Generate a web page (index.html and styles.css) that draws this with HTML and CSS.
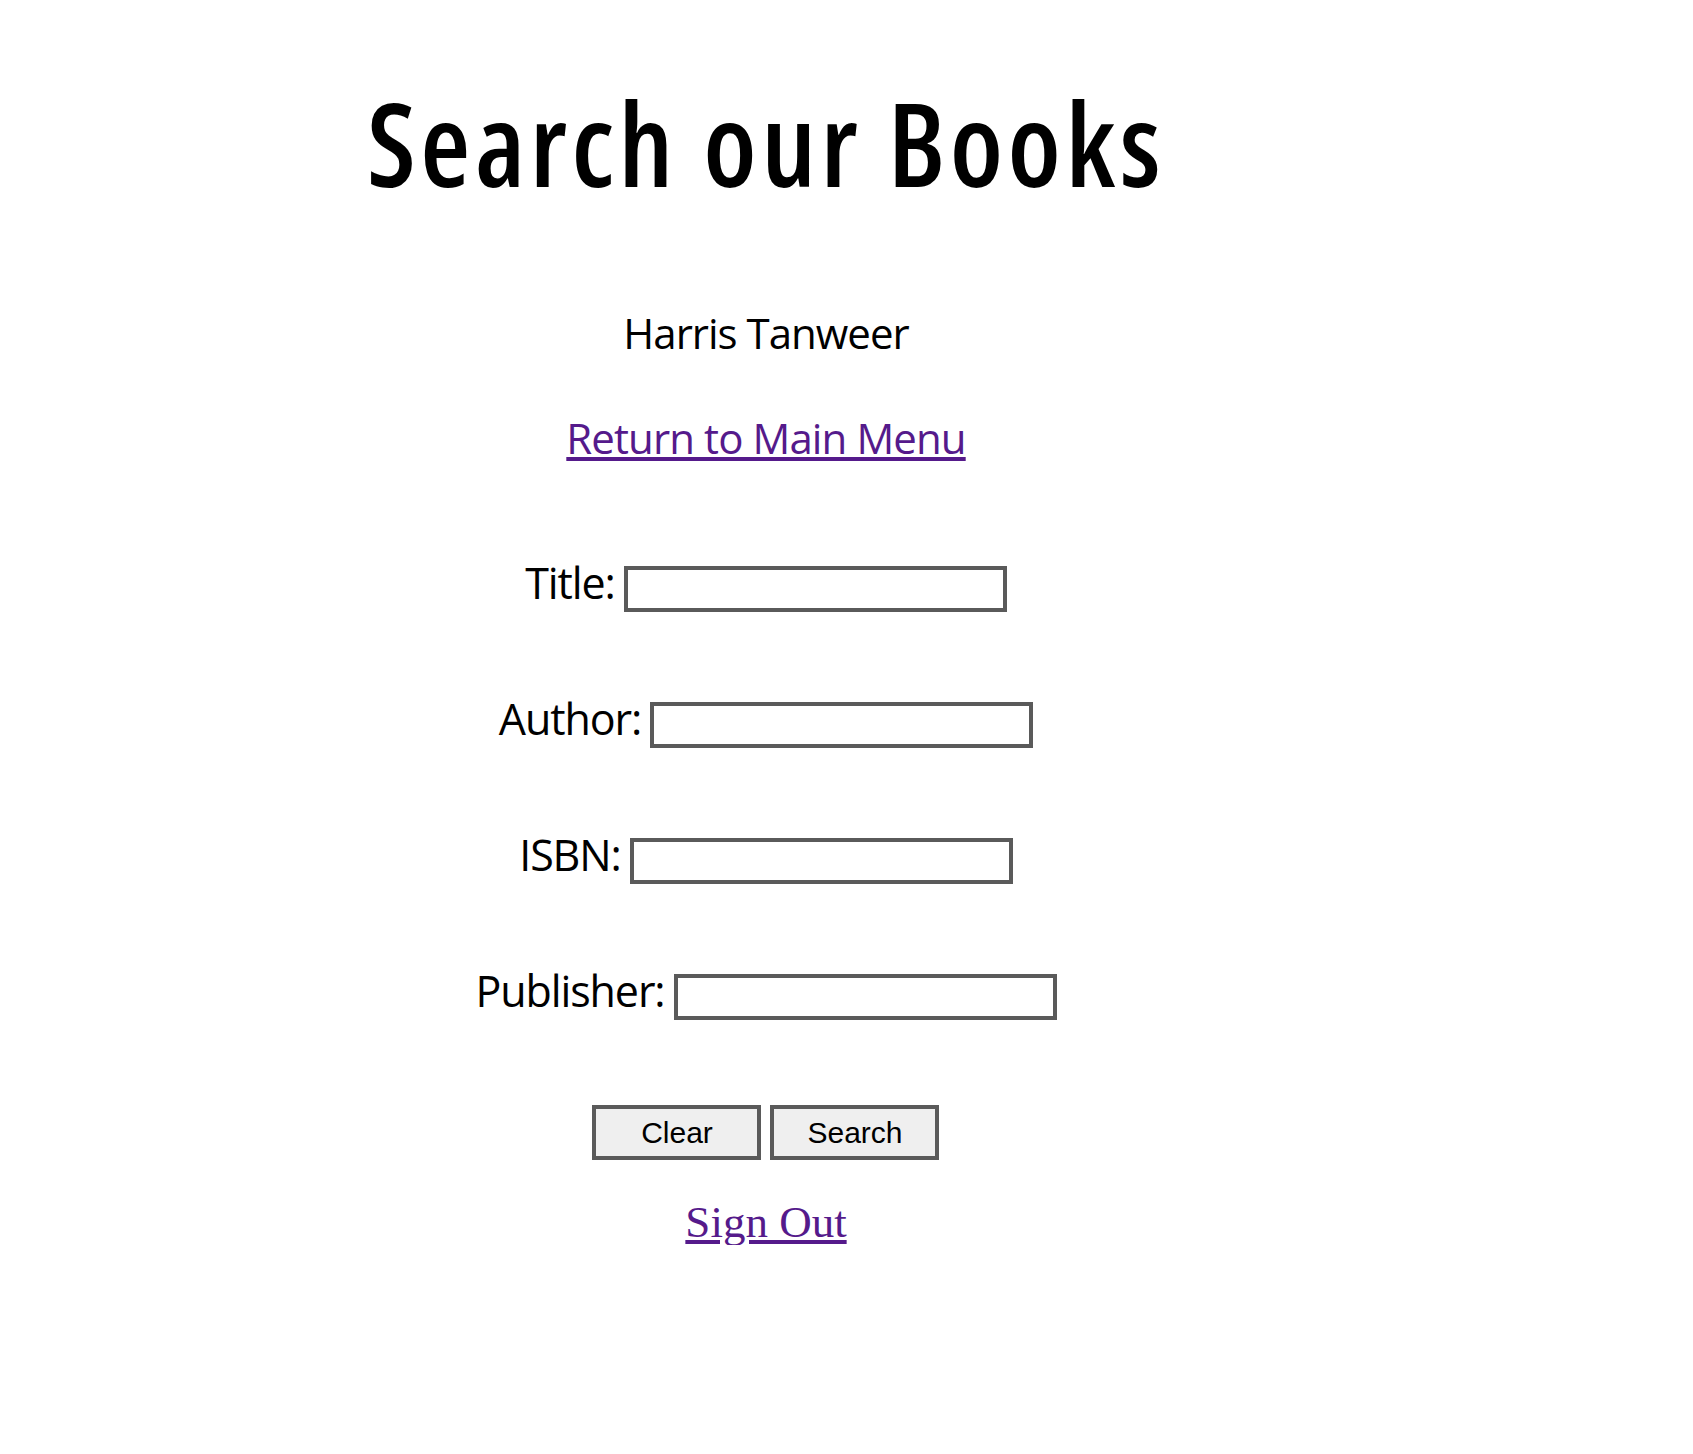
FILE: index.html
```html
<!DOCTYPE html>
<html lang="en">
<head>
<meta charset="utf-8">
<title>Search our Books</title>
<link rel="stylesheet" href="styles.css">
</head>
<body>
<main class="page">
  <h1 class="page-title">Search our Books</h1>
  <h2 class="user-name">Harris Tanweer</h2>
  <a class="menu-link" href="#">Return to Main Menu</a>
  <form class="search-form">
    <div class="field"><label class="field-label" for="title">Title:</label><input class="field-input" id="title" type="text"></div>
    <div class="field"><label class="field-label" for="author">Author:</label><input class="field-input" id="author" type="text"></div>
    <div class="field"><label class="field-label" for="isbn">ISBN:</label><input class="field-input" id="isbn" type="text"></div>
    <div class="field"><label class="field-label" for="publisher">Publisher:</label><input class="field-input" id="publisher" type="text"></div>
    <div class="actions">
      <button class="btn" type="reset">Clear</button>
      <button class="btn" type="button">Search</button>
    </div>
  </form>
  <a class="signout-link" href="#">Sign Out</a>
</main>
</body>
</html>
```
FILE: styles.css
```css
html, body {
  margin: 0;
  padding: 0;
  background: #ffffff;
}

.page {
  width: 1532px;
  display: flex;
  flex-direction: column;
  align-items: center;
  font-family: "Open Sans", "Noto Sans", sans-serif;
  color: #000000;
}

.page-title {
  margin: 85px 0 0;
  font-size: 115px;
  line-height: 1;
  font-weight: 600;
  font-stretch: 75%;
  letter-spacing: 4.5px;
}

.user-name {
  margin: 112px 0 0;
  font-size: 42px;
  line-height: 1;
  font-weight: 500;
  letter-spacing: -1px;
}

.menu-link {
  display: block;
  margin-top: 63px;
  font-size: 42px;
  line-height: 1;
  font-weight: 400;
  letter-spacing: -0.9px;
  color: #551a8b;
  text-decoration: underline;
}

.search-form {
  margin-top: 107px;
  display: flex;
  flex-direction: column;
  align-items: center;
  gap: 90px;
}

.field {
  display: flex;
  align-items: center;
  gap: 9px;
}

.field-label {
  margin-top: -14px;
  font-size: 43px;
  line-height: 1;
  letter-spacing: -1.1px;
}

.field-input {
  box-sizing: border-box;
  width: 383px;
  height: 46px;
  margin: 0;
  padding: 0 6px;
  border: 4px solid #5a5a5a;
  background: #ffffff;
  font-size: 24px;
}

.actions {
  margin-top: -5px;
  display: flex;
  gap: 9px;
}

.btn {
  box-sizing: border-box;
  width: 169px;
  height: 55px;
  margin: 0;
  padding: 0;
  border: 4px solid #5a5a5a;
  background: #efefef;
  color: #000000;
  font-family: "Liberation Sans", Arial, sans-serif;
  font-size: 30px;
  line-height: 1;
}

.signout-link {
  display: block;
  margin-top: 40px;
  font-family: "Liberation Serif", "Times New Roman", serif;
  font-size: 45px;
  line-height: 1;
  color: #551a8b;
  text-decoration: underline;
}
```
